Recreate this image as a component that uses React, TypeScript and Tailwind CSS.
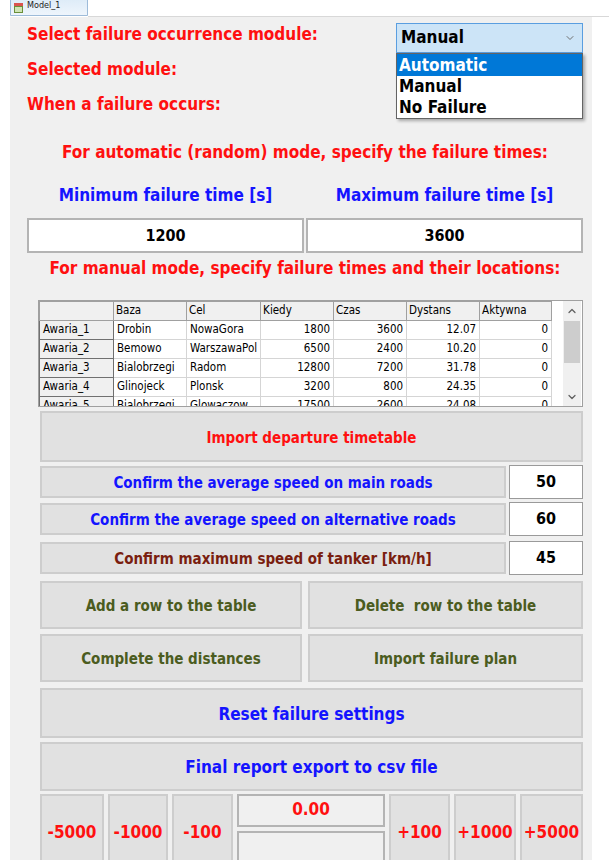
import { ChevronDown, ChevronUp } from 'lucide-react';

const rows = [
  { name: 'Awaria_1', baza: 'Drobin', cel: 'NowaGora', kiedy: '1800', czas: '3600', dyst: '12.07', akt: '0' },
  { name: 'Awaria_2', baza: 'Bemowo', cel: 'WarszawaPol', kiedy: '6500', czas: '2400', dyst: '10.20', akt: '0' },
  { name: 'Awaria_3', baza: 'Bialobrzegi', cel: 'Radom', kiedy: '12800', czas: '7200', dyst: '31.78', akt: '0' },
  { name: 'Awaria_4', baza: 'Glinojeck', cel: 'Plonsk', kiedy: '3200', czas: '800', dyst: '24.35', akt: '0' },
  { name: 'Awaria_5', baza: 'Bialobrzegi', cel: 'Glowaczow', kiedy: '17500', czas: '2600', dyst: '24.08', akt: '0' },
];

const headers = ['Baza', 'Cel', 'Kiedy', 'Czas', 'Dystans', 'Aktywna'];

function FailureGrid() {
  return (
    <div className="relative flex h-[107px] border border-[#a0a0a0] bg-white">
      <div className="h-full w-[522px] overflow-hidden">
        <table className="table-fixed border-collapse font-['DejaVu_Sans_Condensed','DejaVu_Sans',sans-serif] text-[11.5px] font-normal text-black">
          <colgroup>
            <col className="w-[74px]" />
            <col className="w-[73px]" />
            <col className="w-[72px]" />
            <col className="w-[73px]" />
            <col className="w-[73px]" />
            <col className="w-[73px]" />
            <col className="w-[72px]" />
          </colgroup>
          <thead>
            <tr className="h-[19px]">
              <th className="border border-[#a0a0a0] bg-[#f0f0f0]" />
              {headers.map((h) => (
                <th key={h} className="border border-[#a0a0a0] bg-[#f0f0f0] px-[2px] text-left font-normal leading-none">
                  {h}
                </th>
              ))}
            </tr>
          </thead>
          <tbody>
            {rows.map((r) => (
              <tr key={r.name} className="h-[19px] leading-none">
                <td className="border border-[#707070] bg-[#f0f0f0] px-[3px]">{r.name}</td>
                <td className="border border-[#d5d5d5] px-[3px]">{r.baza}</td>
                <td className="overflow-hidden whitespace-nowrap border border-[#d5d5d5] px-[3px]">{r.cel}</td>
                <td className="border border-[#d5d5d5] px-[3px] text-right">{r.kiedy}</td>
                <td className="border border-[#d5d5d5] px-[3px] text-right">{r.czas}</td>
                <td className="border border-[#d5d5d5] px-[3px] text-right">{r.dyst}</td>
                <td className="border border-[#d5d5d5] px-[3px] text-right">{r.akt}</td>
              </tr>
            ))}
          </tbody>
        </table>
      </div>
      {/* vertical scrollbar */}
      <div className="ml-auto mr-[1px] flex h-full w-[18px] flex-col items-center bg-[#f0f0f0]">
        <ChevronUp className="mt-[4px] h-[12px] w-[12px] text-[#606060]" strokeWidth={2.5} />
        <div className="mt-[4px] h-[42px] w-[16px] bg-[#cdcdcd]" />
        <ChevronDown className="mb-[3px] mt-auto h-[12px] w-[12px] text-[#606060]" strokeWidth={2.5} />
      </div>
    </div>
  );
}

function Btn({
  children,
  className,
  pad = 'pt-[3px]',
}: {
  children: React.ReactNode;
  className: string;
  pad?: string;
}) {
  return (
    <div className={`flex items-center justify-center border-2 border-[#cdcdcd] bg-[#e1e1e1] ${pad} ${className}`}>
      {children}
    </div>
  );
}

function SpeedRow({ label, value, color, mt }: { label: string; value: string; color: string; mt: string }) {
  return (
    <div className={`flex h-[34px] items-center ${mt}`}>
      <Btn className={`h-[32px] w-[466px] text-[15px] ${color}`}>{label}</Btn>
      <div className="ml-auto flex h-[34px] w-[74px] items-center justify-center border border-[#9a9a9a] bg-white text-[16px] text-black">
        {value}
      </div>
    </div>
  );
}

export default function App() {
  return (
    <div className="relative h-[860px] w-[609px] overflow-hidden bg-white font-['DejaVu_Sans_Condensed','DejaVu_Sans',sans-serif] font-bold">
      {/* tab header */}
      <div className="relative h-[17px]">
        <div className="absolute left-[10px] top-[-4px] flex h-[20px] w-[78px] items-start gap-[4px] rounded-t-[2px] border border-[#9dbbd9] bg-gradient-to-b from-[#dbeaf7] to-[#eef5fc] px-[3px]">
          <div className="mt-[6px] flex h-[10px] w-[9px] flex-col">
            <div className="h-[3px] bg-[#d9534f]" />
            <div className="h-[7px] border border-[#6a8f3a] bg-[#cfe4b5]" />
          </div>
          <span className="mt-[4px] text-[9px] font-normal leading-none text-[#222]">Model_1</span>
        </div>
        <div className="absolute bottom-0 left-[88px] right-0 h-px bg-[#d8d8d8]" />
      </div>

      <div className="ml-[10px] h-[843px] w-[582px] bg-[#f0f0f0]">
        {/* module selection */}
        <div className="relative pl-[17px] text-[17px] text-[#ff1010]">
          <div className="flex h-[35px] items-center">Select failure occurrence module:</div>
          <div className="flex h-[35px] items-center">Selected module:</div>
          <div className="flex h-[35px] items-center">When a failure occurs:</div>

          <div className="absolute left-[386px] top-[6px] w-[187px]">
            <div className="flex h-[30px] items-center border border-[#5a9ee0] bg-[#cce4f7] pl-[4px] pr-[6px] text-[17px] text-black">
              Manual
              <ChevronDown className="ml-auto h-[12px] w-[12px] text-[#707070]" strokeWidth={2} />
            </div>
            <div className="border border-[#646464] bg-white text-[17px] leading-none text-black shadow-[2px_2px_3px_rgba(0,0,0,0.3)]">
              <div className="flex h-[22px] items-center bg-[#0078d7] pl-[2px] text-white">Automatic</div>
              <div className="flex h-[21px] items-center pl-[2px]">Manual</div>
              <div className="flex h-[21px] items-center pl-[2px]">No Failure</div>
            </div>
          </div>
        </div>

        {/* automatic mode */}
        <div className="pl-[17px] pr-[9px]">
          <div className="mt-[17px] flex h-[28px] items-center justify-center text-[17px] text-[#ff1010]">
            For automatic (random) mode, specify the failure times:
          </div>
          <div className="mt-[15px] flex h-[28px] text-[17px] text-[#1414ff]">
            <div className="flex w-[277px] items-center justify-center">Minimum failure time [s]</div>
            <div className="ml-auto flex w-[277px] items-center justify-center">Maximum failure time [s]</div>
          </div>
          <div className="mt-[8px] flex h-[35px] text-[16px] text-black">
            <div className="flex w-[277px] items-center justify-center border-2 border-[#b4b4b4] bg-white">1200</div>
            <div className="ml-auto flex w-[277px] items-center justify-center border-2 border-[#b4b4b4] bg-white">3600</div>
          </div>
          <div className="mt-[3px] flex h-[26px] items-center justify-center text-[17px] text-[#ff1010]">
            For manual mode, specify failure times and their locations:
          </div>
        </div>

        {/* manual mode */}
        <div className="ml-[28px] mr-[9px] mt-[18px]">
          <FailureGrid />
        </div>

        <div className="ml-[30px] mr-[9px] mt-[4px]">
          <Btn className="h-[51px] text-[15px] text-[#ff1010]">Import departure timetable</Btn>

          <SpeedRow mt="mt-[3px]" label="Confirm the average speed on main roads" value="50" color="text-[#1414ff]" />
          <SpeedRow mt="mt-[3px]" label="Confirm the average speed on alternative roads" value="60" color="text-[#1414ff]" />
          <SpeedRow mt="mt-[5px]" label="Confirm maximum speed of tanker [km/h]" value="45" color="text-[#7a1e10]" />

          <div className="mt-[6px] flex gap-[6px] text-[15px] text-[#4b5c20]">
            <Btn className="h-[48px] w-[262px]">Add a row to the table</Btn>
            <Btn className="h-[48px] flex-1">Delete&nbsp; row to the table</Btn>
          </div>
          <div className="mt-[5px] flex gap-[6px] text-[15px] text-[#4b5c20]">
            <Btn className="h-[48px] w-[262px]">Complete the distances</Btn>
            <Btn className="h-[48px] flex-1">Import failure plan</Btn>
          </div>

          <Btn className="mt-[6px] h-[50px] text-[17px] text-[#1414ff]">Reset failure settings</Btn>
          <Btn className="mt-[4px] h-[49px] text-[17px] text-[#1414ff]">Final report export to csv file</Btn>

          {/* time offset controls */}
          <div className="mt-[3px] flex gap-[4px] text-[17px] text-[#ff1010]">
            <Btn pad="pb-[3px]" className="h-[80px] w-[64px]">-5000</Btn>
            <Btn pad="pb-[3px]" className="h-[80px] w-[60px]">-1000</Btn>
            <Btn pad="pb-[3px]" className="h-[80px] w-[61px]">-100</Btn>
            <div className="flex w-[148px] flex-col gap-[4px]">
              <div className="flex h-[33px] items-center justify-center border-2 border-[#b4b4b4] bg-[#f0f0f0] pb-[2px]">0.00</div>
              <div className="h-[44px] border-2 border-[#b4b4b4] bg-[#f0f0f0]" />
            </div>
            <Btn pad="pb-[3px]" className="h-[80px] w-[61px]">+100</Btn>
            <Btn pad="pb-[3px]" className="h-[80px] w-[62px]">+1000</Btn>
            <Btn pad="pb-[3px]" className="h-[80px] flex-1">+5000</Btn>
          </div>
        </div>
      </div>
    </div>
  );
}
